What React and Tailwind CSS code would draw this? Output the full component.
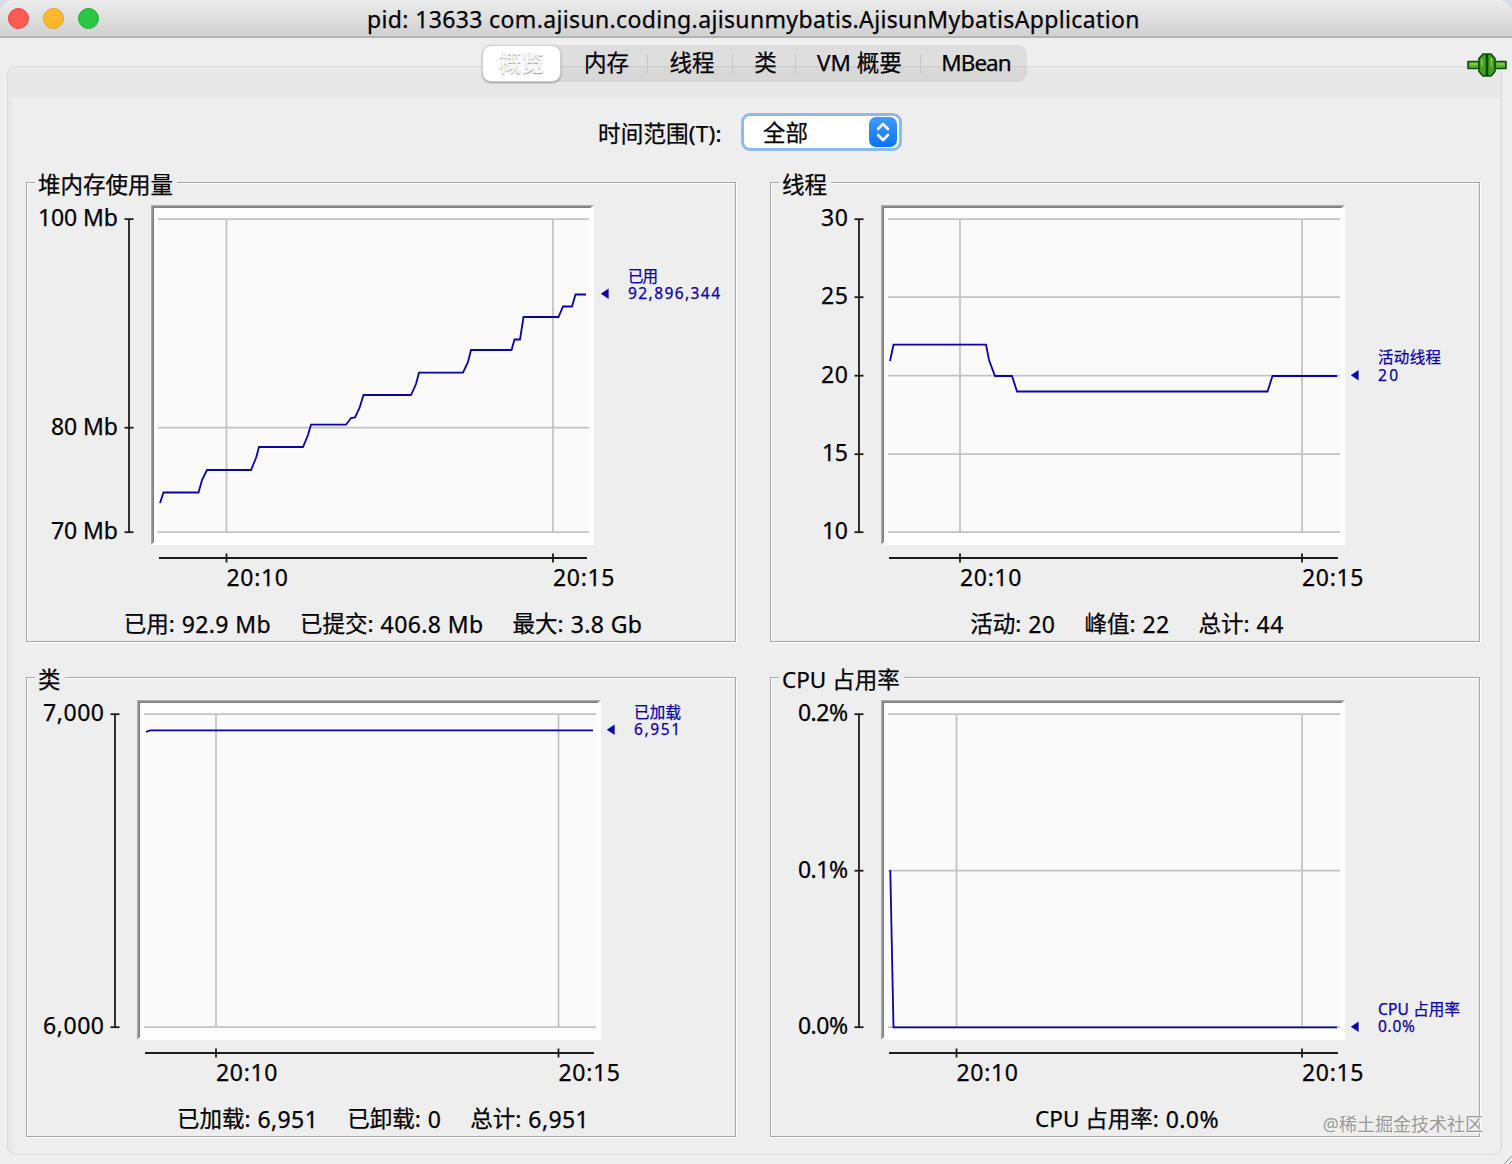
import { useState } from "react";

const tabs = [
  { id: "overview", name: "概览", className: "w-[79px]" },
  { id: "memory", name: "内存", className: "w-[87px] pl-[4px]" },
  { id: "threads", name: "线程", className: "w-[85px] pl-[3px]" },
  { id: "classes", name: "类", className: "w-[63px] pl-[2px]" },
  { id: "vm", name: "VM 概要", className: "w-[125px] pl-[2px]" },
  { id: "mbean", name: "MBean", className: "w-[105px] pl-[5px] tracking-[-1px]" },
];

// every chart is drawn in window coordinates, "origin" is the corner of its panel
const charts = [
  {
    id: "heap",
    title: "堆内存使用量",
    origin: [27, 183],
    plot: [151, 594],
    axisX: 129,
    xAxis: [159, 587],
    yTicks: [
      { y: 219, label: "100 Mb", width: 80 },
      { y: 427.5, label: "80 Mb", width: 67 },
      { y: 532, label: "70 Mb", width: 67 },
    ],
    xTicks: [
      { x: 226.5, label: "20:10" },
      { x: 553, label: "20:15" },
    ],
    points:
      "160,503 163.5,492.5 198.5,492.5 202,480 207,470 251,470 256,458 259,447 303,447 308,435 311,424.7 346,424.7 351,418 355,417.5 359.5,408 363.5,395 411,395 416,384 419,372.7 463,372.7 468,362 471,350 511.5,350 514.5,339.5 520,339.5 523.5,317 558.5,317 563,306.5 572,306.5 575.5,294.5 586,294.5",
    legend: { x: 628, y: 294, name: "已用", nameWidth: 30, value: "92,896,344", width: 92 },
    summary: [
      ["已用:", "92.9 Mb"],
      ["已提交:", "406.8 Mb"],
      ["最大:", "3.8 Gb"],
    ],
  },
  {
    id: "threads",
    title: "线程",
    origin: [771, 183],
    plot: [881, 1345],
    axisX: 859,
    xAxis: [889, 1338],
    yTicks: [
      { y: 219, label: "30", width: 27 },
      { y: 297, label: "25", width: 27 },
      { y: 375.5, label: "20", width: 27 },
      { y: 454, label: "15", width: 26 },
      { y: 532, label: "10", width: 26 },
    ],
    xTicks: [
      { x: 960, label: "20:10" },
      { x: 1302, label: "20:15" },
    ],
    points:
      "890,361 893.5,344.7 986,344.7 989,360 995,376 1012,376 1017,391.5 1267.5,391.5 1272.5,376 1337,376",
    legend: { x: 1378, y: 375.5, name: "活动线程", nameWidth: 63, value: "20", width: 20 },
    summary: [
      ["活动:", "20"],
      ["峰值:", "22"],
      ["总计:", "44"],
    ],
  },
  {
    id: "classes",
    title: "类",
    origin: [27, 678],
    plot: [137, 601],
    axisX: 115,
    xAxis: [145, 594],
    yTicks: [
      { y: 714, label: "7,000", width: 61 },
      { y: 1027, label: "6,000", width: 61 },
    ],
    xTicks: [
      { x: 216, label: "20:10" },
      { x: 558.5, label: "20:15" },
    ],
    points: "146,732 150,730.3 593,730.3",
    legend: { x: 634, y: 730, name: "已加载", nameWidth: 47, value: "6,951", width: 46 },
    summary: [
      ["已加载:", "6,951"],
      ["已卸载:", "0"],
      ["总计:", "6,951"],
    ],
  },
  {
    id: "cpu",
    title: "CPU 占用率",
    origin: [771, 678],
    plot: [881, 1345],
    axisX: 859,
    xAxis: [889, 1338],
    yTicks: [
      { y: 714, label: "0.2%", width: 50 },
      { y: 870.5, label: "0.1%", width: 50 },
      { y: 1027, label: "0.0%", width: 50 },
    ],
    xTicks: [
      { x: 956.5, label: "20:10" },
      { x: 1302, label: "20:15" },
    ],
    points: "890.3,870 893.5,1027.3 1337,1027.3",
    legend: { x: 1378, y: 1027, name: "CPU 占用率", nameWidth: 82, value: "0.0%", width: 37 },
    summary: [["CPU 占用率:", "0.0%"]],
  },
];

function Chart({ chart }) {
  const { origin, plot, axisX, xAxis, yTicks, xTicks, legend } = chart;
  const [left, right] = plot;
  const top = origin[1] + 22;
  const bottom = top + 340;
  const gridTop = yTicks[0].y;
  const gridBottom = yTicks[yTicks.length - 1].y;
  const axisY = gridBottom + 26;

  return (
    <svg width="708" height="417" viewBox={`${origin[0]} ${origin[1]} 708 417`} className="block shrink-0">
      <rect x={left} y={top} width={right - left} height={bottom - top} fill="#fefefe" />
      <rect x={left + 7} y={gridTop} width={right - left - 12} height={gridBottom - gridTop} fill="#fafafa" />
      <path d={`M${left} ${bottom}V${top}H${right}l-2 2H${left + 2}V${bottom - 2}z`} fill="#a9a9a9" />
      <path d={`M${left + 1.5} ${bottom - 1.5}V${top + 1.5}H${right - 2}l-1.5 1.5H${left + 3}V${bottom - 3}z`} fill="#7c7c7c" />

      <g stroke="#c3c3c3" strokeWidth="1.8">
        {yTicks.map((tick) => (
          <path key={tick.y} d={`M${left + 7} ${tick.y + 0.2}H${right - 5}`} />
        ))}
        {xTicks.map((tick) => (
          <path key={tick.x} d={`M${tick.x} ${gridTop}V${gridBottom}`} />
        ))}
      </g>

      <g stroke="#1c1c1c" strokeWidth="1.8">
        <path d={`M${axisX} ${gridTop}V${gridBottom}M${xAxis[0]} ${axisY}H${xAxis[1]}`} />
        {yTicks.map((tick) => (
          <path key={tick.y} d={`M${axisX - 4.5} ${tick.y + 0.2}h9`} />
        ))}
        {xTicks.map((tick) => (
          <path key={tick.x} d={`M${tick.x} ${axisY - 4.5}v9`} />
        ))}
      </g>

      <g fontSize="23" fill="#000" stroke="#000" strokeWidth="0.25">
        {yTicks.map((tick) => (
          <text key={tick.y} x={axisX - 11 - tick.width} y={tick.y + 7} textLength={tick.width}>
            {tick.label}
          </text>
        ))}
        {xTicks.map((tick) => (
          <text key={tick.x} x={tick.x} y={axisY + 27.5} textLength="61.5">
            {tick.label}
          </text>
        ))}
      </g>

      <polyline points={chart.points} fill="none" stroke="#0b00a8" strokeWidth="1.8" />

      <g fontSize="15.5" fill="#0b00a8" stroke="#0b00a8" strokeWidth="0.25">
        <path d={`M${legend.x - 27} ${legend.y - 0.3}l7.500 -5v10z`} />
        <text x={legend.x} y={legend.y - 12.5} textLength={legend.nameWidth}>
          {legend.name}
        </text>
        <text x={legend.x} y={legend.y + 5} textLength={legend.width}>
          {legend.value}
        </text>
      </g>
    </svg>
  );
}

function Panel({ chart }) {
  return (
    <section className="relative flex flex-col border border-[#a6a6a6] shadow-[inset_1px_1px_0_#fff,1px_1px_0_#fff]">
      <h2 className="absolute left-2 -top-[15px] bg-[#eee] pr-[4px] pl-[3px] text-[22.5px] leading-[34px] whitespace-nowrap">
        {chart.title}
      </h2>
      <Chart chart={chart} />
      <div className="flex h-[41px] items-center justify-center gap-[29px] pt-[7px] pl-[4px]">
        {chart.summary.map(([label, value]) => (
          <p key={label} className="flex gap-[7px] text-[22.5px] leading-8 whitespace-nowrap">
            <span>{label}</span>
            <span className="text-[23px] tracking-[0.4px]">{value}</span>
          </p>
        ))}
      </div>
    </section>
  );
}

function PlugIcon() {
  return (
    <svg width="42" height="28" viewBox="0 0 42 28" className="absolute top-[51px] right-[4px] z-20">
      <g fill="#5fae2c" stroke="#0c4d12" strokeWidth="1.6" strokeLinejoin="round">
        <path d="M2 10.5h11v7H2z" />
        <path d="M29 10.5h11v7H29z" />
        <path d="M20.500 3h-3.500l-4 4.500v13l4 4.500h3.500z" fill="#459f20" />
        <path d="M21.500 3h3.500l4 4.500v13l-4 4.500h-3.500z" fill="#459f20" />
      </g>
      <path d="M16 8v7M25.500 7v8M4 13h8M31 13h7" stroke="#8bcf52" strokeWidth="1.400" />
      <path d="M21 3v22" stroke="#0c3d0c" strokeWidth="1.200" />
    </svg>
  );
}

export default function App() {
  const [activeTab, setActiveTab] = useState("overview");

  return (
    <div className="h-[1164px] w-[1512px] overflow-hidden bg-[#d9d9ee] font-['Noto_Sans','Noto_Sans_CJK_SC',sans-serif] text-black">
      <div className="relative h-full overflow-hidden rounded-t-[14px] bg-[#eee] [-webkit-text-stroke:0.25px]">
        <header className="flex h-[38px] items-center border-b-2 border-[#b4b4b4] bg-linear-to-b from-[#ececec] to-[#d1d1d1] pl-[8px]">
          <div className="flex w-[359px] gap-[14px]">
            <span className="size-[21px] rounded-full border border-[#e2443f] bg-[#ff5b55]" />
            <span className="size-[21px] rounded-full border border-[#e2a02c] bg-[#fdb82e]" />
            <span className="size-[21px] rounded-full border border-[#1fab32] bg-[#28c840]" />
          </div>
          <h1 className="pt-px text-[23px] leading-8 tracking-[0.36px] whitespace-nowrap">
            pid: 13633 com.ajisun.coding.ajisunmybatis.AjisunMybatisApplication
          </h1>
        </header>

        <nav className="relative z-10 mt-[7px] -mb-4 ml-[482px] flex h-[37px] w-[545px] rounded-[9px] bg-black/[0.065]">
          {tabs.map((tab, i) => (
            <button
              key={tab.id}
              type="button"
              onClick={() => setActiveTab(tab.id)}
              className={`relative flex shrink-0 items-center justify-center pb-[2px] text-[22.5px] whitespace-nowrap ${tab.className} ${
                activeTab === tab.id
                  ? "rounded-[9px] border border-[#cfcfcf] bg-white text-white shadow-[0_1px_2px_rgba(0,0,0,0.35)] [text-shadow:0_1px_1px_#777]"
                  : ""
              }`}
            >
              {tab.name}
              {i > 0 && i < tabs.length - 1 && (
                <span className="absolute top-[9px] right-0 h-5 w-px bg-[#c6c6c6]" />
              )}
            </button>
          ))}
        </nav>
        <PlugIcon />

        <main className="mr-[10px] ml-[7px] h-[1089px] rounded-lg border border-[#dcdcdc] bg-[#e8e8e8] pt-[30px] pr-[1px] pl-[4px]">
          <div className="h-full rounded-b-md bg-[#eee] pt-4 pl-[14px]">
            <div className="flex h-[38px] items-center pl-[572px]">
              <label className="w-[143px] pt-1 text-[22.5px] leading-8 tracking-[0.2px] whitespace-nowrap">时间范围(T):</label>
              <button
                type="button"
                className="flex h-[38px] w-[161px] items-center justify-between rounded-[9px] border-[3px] border-[#8db9ec] bg-white pr-[2px] pl-[19px] text-[22.5px] leading-8"
              >
                <span className="pt-px">全部</span>
                <span className="flex h-[30px] w-[28px] items-center justify-center rounded-[7px] bg-linear-to-b from-[#3f9bff] to-[#0671f5]">
                  <svg width="16" height="22" viewBox="0 0 16 22" fill="none" stroke="#fff" strokeWidth="2.600" strokeLinecap="round" strokeLinejoin="round">
                    <path d="M3 8l5-5 5 5M3 14l5 5 5-5" />
                  </svg>
                </span>
              </button>
            </div>

            <div className="mt-[31px] grid grid-cols-[710px_710px] grid-rows-[460px_460px] gap-x-[34px] gap-y-[35px]">
              {charts.map((chart) => (
                <Panel key={chart.id} chart={chart} />
              ))}
            </div>
          </div>
        </main>

        <p className="absolute right-[29px] bottom-[28px] text-[18px] leading-6 whitespace-nowrap text-[#9a9a9a] [-webkit-text-stroke:0px] [text-shadow:1px_1px_0_#f4f4f4]">
          @稀土掘金技术社区
        </p>
        <svg width="8" height="8" viewBox="0 0 8 8" className="absolute right-0 bottom-0" stroke="#8a8a8a" strokeWidth="1">
          <path d="M0 8l8-8M5 8l3-3" />
        </svg>
      </div>
    </div>
  );
}
